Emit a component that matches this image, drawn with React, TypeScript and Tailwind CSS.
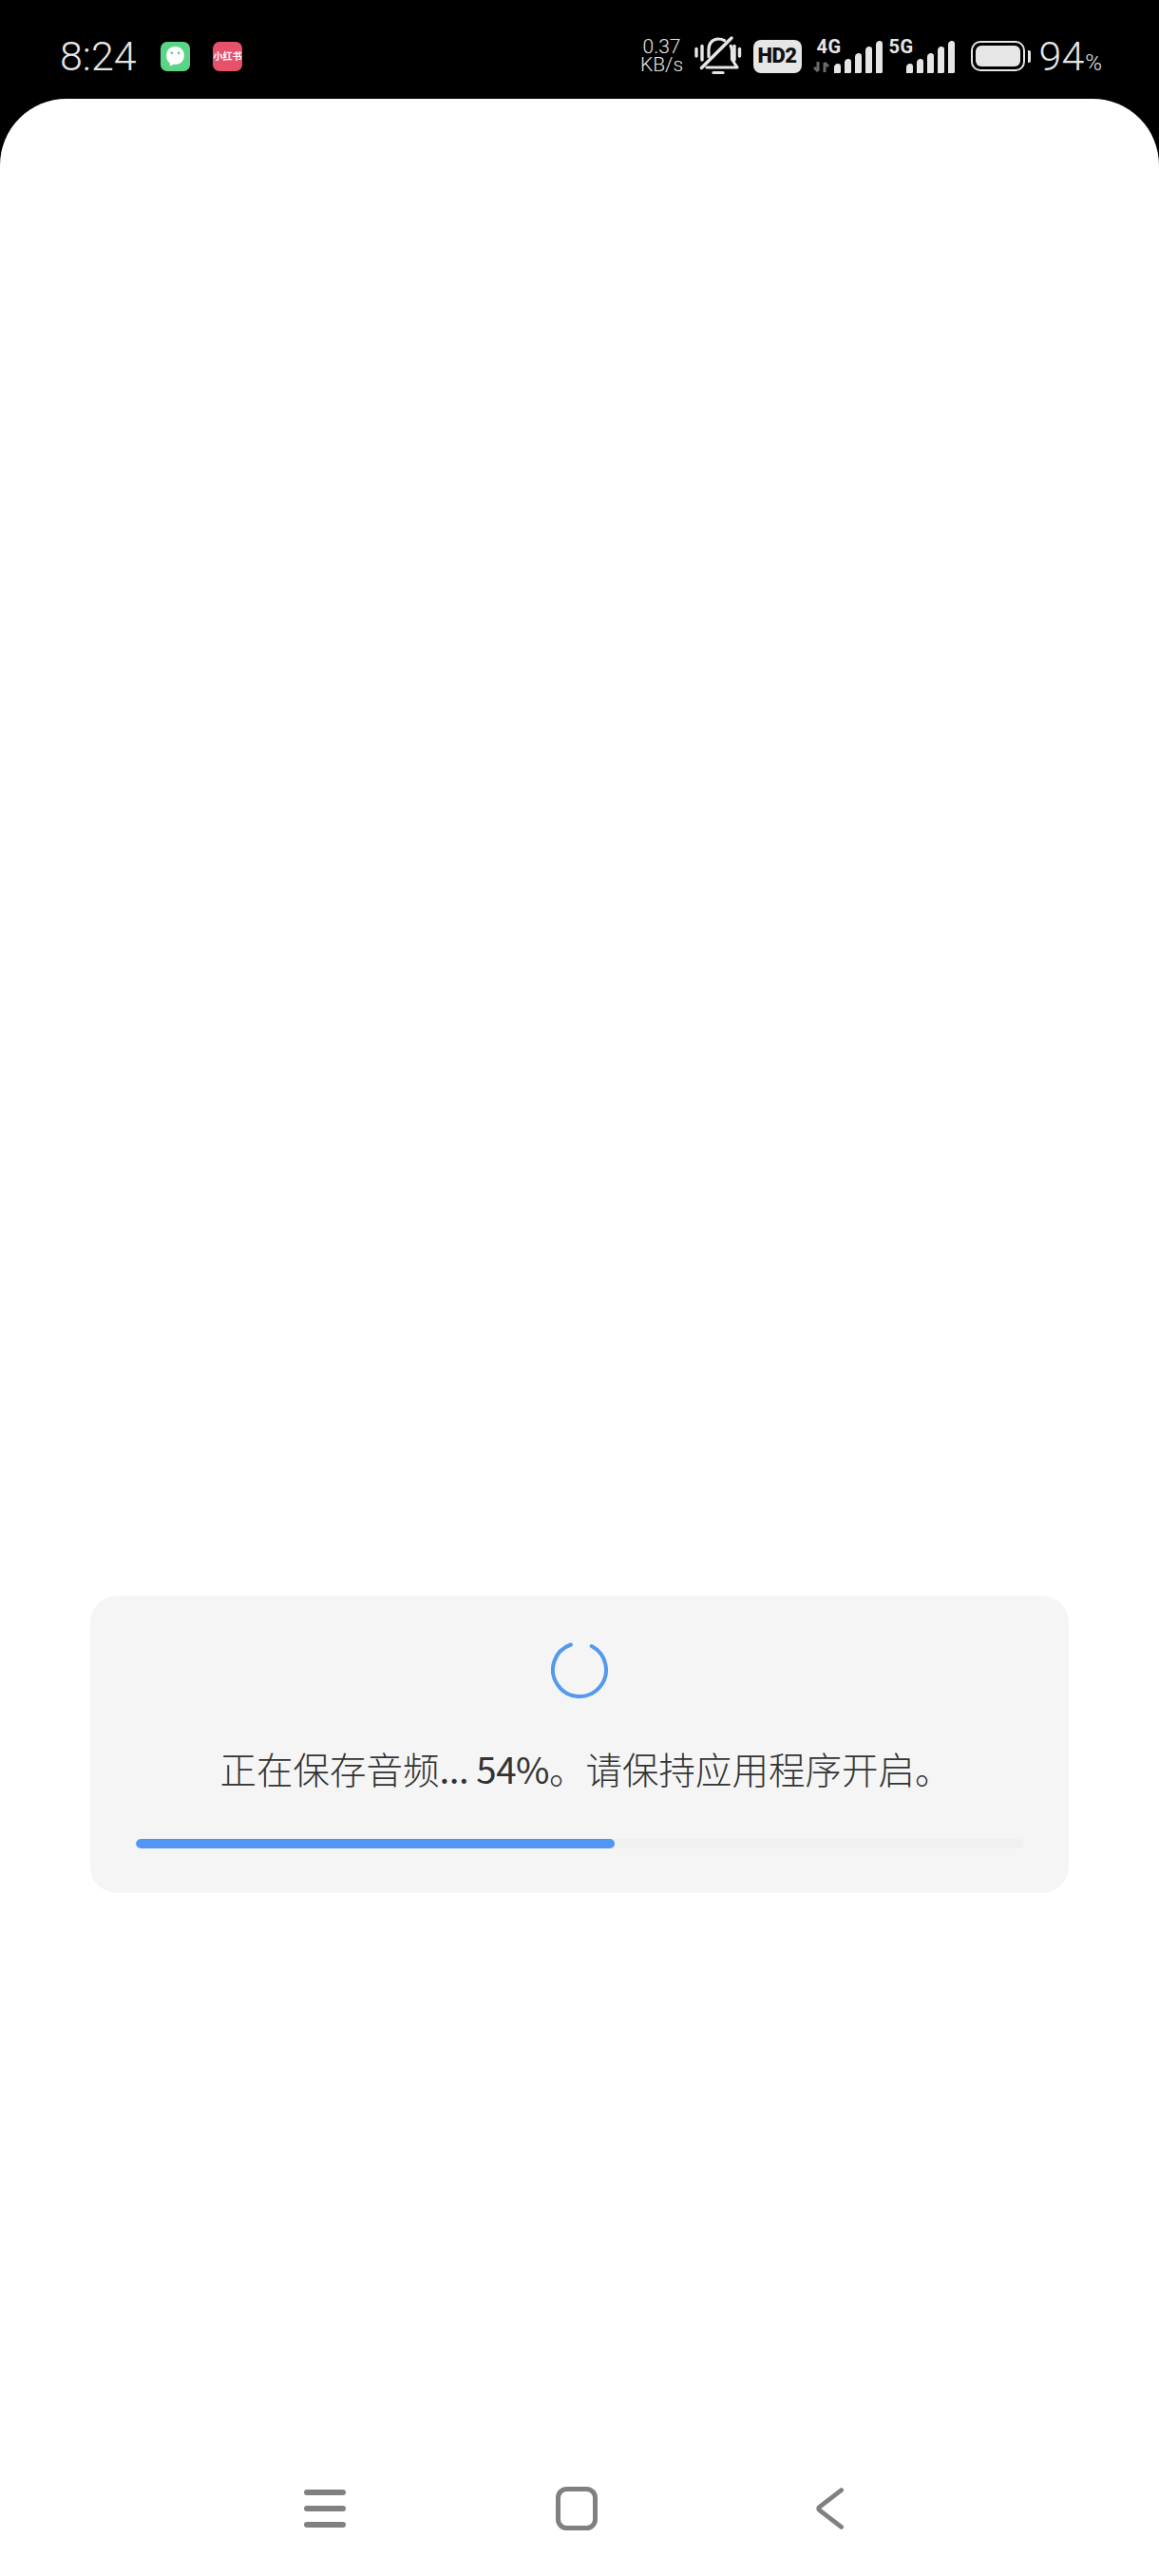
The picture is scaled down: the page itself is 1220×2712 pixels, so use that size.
const SIGNAL_HEIGHTS = [9, 14, 20, 27, 33];

function Bars() {
  return (
    <svg width="52" height="34" viewBox="0 0 52 34" className="block">
      {SIGNAL_HEIGHTS.map((h, i) => (
        <path
          key={i}
          d={`M${i * 11} 34 V${34 - h + 3} Q${i * 11} ${34 - h} ${i * 11 + 3} ${34 - h - 1} H${i * 11 + 4} Q${i * 11 + 7} ${34 - h - 1} ${i * 11 + 7} ${34 - h + 2} V32.5 Q${i * 11 + 7} 34 ${i * 11 + 5.5} 34 Z`}
          fill="#e6e6e6"
        />
      ))}
    </svg>
  );
}

function MutedBell() {
  return (
    <svg width="50" height="42" viewBox="0 0 50 42" fill="none" stroke="#e6e6e6" strokeLinecap="round" strokeLinejoin="round" className="block">
      <path d="M2 13.5V21M8 10.5V25M42 10.5V25M47.5 13.5V21" strokeWidth="3.4" />
      <path d="M13 33H45L39.5 24.5V15.5C39.5 13.5 39 12 38.3 10.5M31.5 4.6C29.5 3.4 27 3 25 3C19 3 15 7.5 15 14V21.5" strokeWidth="3.2" />
      <path d="M7.5 33.5L39 2" strokeWidth="3.4" />
      <path d="M20 38.5H30" strokeWidth="3.2" />
    </svg>
  );
}

function Signal({ label, arrows }: { label: string; arrows?: boolean }) {
  return (
    <div className="flex h-[36px] items-end">
      {arrows && (
        <svg width="17" height="11" viewBox="0 0 17 11" fill="none" stroke="#6a6a6a" strokeWidth="3" className="mb-[1px] mr-[5px] block">
          <path d="M5 0V10M1 6L5 10L5 10" />
          <path d="M12 11V1M12 1L16 5" />
        </svg>
      )}
      <div className="relative">
        <span className="absolute left-[-18px] top-[-3px] text-[20px] font-bold leading-[18px] tracking-[0.5px] text-[#e6e6e6]">{label}</span>
        <Bars />
      </div>
    </div>
  );
}

function Battery() {
  return (
    <div className="flex items-center gap-[3px]">
      <div className="flex h-[32px] w-[57px] rounded-[10px] border-2 border-[#e6e6e6] p-[3px]">
        <div className="flex-1 rounded-[6px] bg-[#e6e6e6]" />
      </div>
      <div className="h-[13px] w-[3px] rounded-r-[2px] bg-[#e6e6e6]" />
    </div>
  );
}

function StatusBar() {
  return (
    <div className="flex h-[104px] shrink-0 items-center pl-[63px] pr-[60px] pt-[14px] text-[#e6e6e6] font-['Roboto',sans-serif]">
      <span className="w-[81px] text-[43px] font-light leading-none">8:24</span>
      <div className="ml-[25px] flex h-[31px] w-[31px] items-center justify-center rounded-[7px] bg-[#5ad586]">
        <svg width="25" height="24" viewBox="0 0 24 23">
          <path d="M12 2C6.5 2 3 6 3 11C3 14.5 4.2 17 6.5 18.5L6.5 21.5L10.5 19.8C11 19.9 11.5 20 12 20C17.5 20 21 16 21 11C21 6 17.5 2 12 2Z" fill="#ffffff" />
          <circle cx="8.5" cy="8.5" r="1.3" fill="#5ad586" />
          <circle cx="15.5" cy="8.5" r="1.3" fill="#5ad586" />
        </svg>
      </div>
      <div className="ml-[24px] flex h-[31px] w-[31px] items-center justify-center overflow-hidden rounded-[7px] bg-[#e5526a]">
        <span className="whitespace-nowrap text-[10px] font-bold leading-none text-white font-['Noto_Sans_CJK_SC',sans-serif]">小红书</span>
      </div>

      <div className="ml-auto flex items-center">
        <div className="flex w-[44px] flex-col items-center text-[21px] font-light leading-[19px]">
          <span>0.37</span>
          <span>KB/s</span>
        </div>
        <div className="ml-[12px]"><MutedBell /></div>
        <div className="ml-[12px] flex h-[35px] w-[51px] items-center justify-center rounded-[8px] bg-[#e6e6e6] text-[22px] font-black leading-none tracking-[-0.5px] text-[#111111]">HD2</div>
        <div className="ml-[12px]"><Signal label="4G" arrows /></div>
        <div className="ml-[24px]"><Signal label="5G" /></div>
        <div className="ml-[16px]"><Battery /></div>
        <div className="ml-[9px] flex items-baseline text-[43px] font-light leading-none">
          <span>94</span>
          <span className="ml-[1px] text-[24px]">%</span>
        </div>
      </div>
    </div>
  );
}

function Spinner() {
  return (
    <svg width="60" height="60" viewBox="0 0 60 60" fill="none" className="block">
      <path d="M42.7 5.05A28 28 0 1 1 20.9 3.5" stroke="#5599ee" strokeWidth="4" strokeLinecap="round" />
    </svg>
  );
}

function SavingCard() {
  return (
    <div className="flex flex-col items-center rounded-[28px] bg-[#f5f5f5] px-[48px] pb-[47px] pt-[48px]">
      <Spinner />
      <p className="ml-[13px] mt-[45px] whitespace-nowrap text-[38.5px] font-light leading-[56px] text-[#333333] font-['Noto_Sans_CJK_SC',sans-serif]">
        正在保存音频<span className="font-normal tracking-[-0.5px]">... 54%</span>。请保持应用程序开启。
      </p>
      <div className="mt-[47px] h-[10px] w-full overflow-hidden rounded-full bg-[#f0f0f0]">
        <div className="h-full w-[54%] rounded-full bg-[#5096f2]" />
      </div>
    </div>
  );
}

function NavBar() {
  return (
    <div className="flex h-[94px] items-start justify-between pl-[320px] pr-[331px]">
      <svg width="44" height="40" viewBox="0 0 44 40" fill="none" stroke="#808080" strokeWidth="6" strokeLinecap="round" className="mt-[3px] block">
        <path d="M3 3H41M3 20H41M3 37H41" />
      </svg>
      <svg width="44" height="46" viewBox="0 0 44 46" fill="none" stroke="#808080" strokeWidth="5" className="mr-[8px] block">
        <rect x="2.5" y="2.5" width="39" height="41" rx="9" />
      </svg>
      <svg width="31" height="46" viewBox="0 0 32 46" fill="none" stroke="#808080" strokeWidth="5" strokeLinecap="round" strokeLinejoin="round" className="block">
        <path d="M28.5 3L5 21Q2.5 23 5 25L28.5 43" />
      </svg>
    </div>
  );
}

export default function App() {
  return (
    <div className="flex h-[2712px] w-[1220px] flex-col bg-black">
      <StatusBar />
      <div className="flex flex-1 flex-col rounded-t-[70px] bg-white">
        <main className="flex-1 px-[95px] pt-[1576px]">
          <SavingCard />
        </main>
        <NavBar />
      </div>
    </div>
  );
}
